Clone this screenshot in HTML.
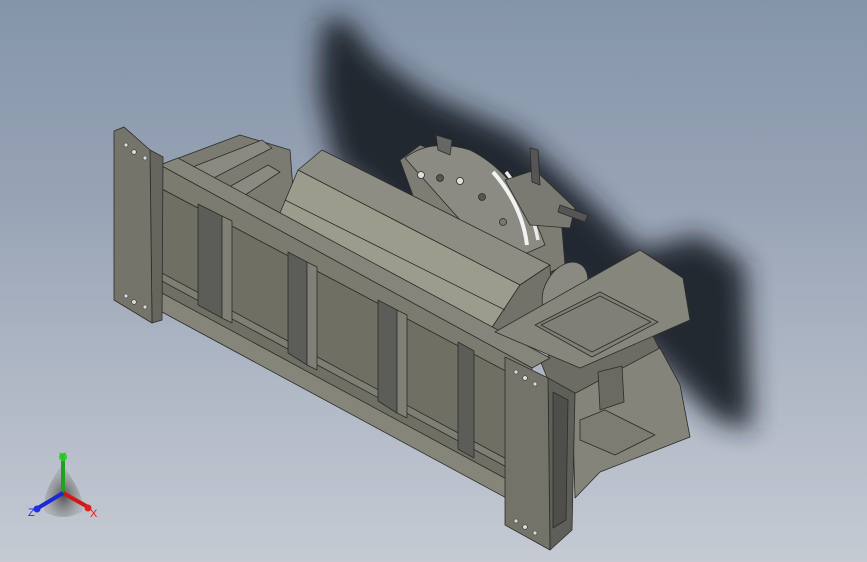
<!DOCTYPE html>
<html><head><meta charset="utf-8"><style>
html,body{margin:0;padding:0;width:867px;height:562px;overflow:hidden}
body{background:linear-gradient(180deg,#8595a9 0%,#97a3b5 35%,#b1b9c6 70%,#c5cad3 100%)}
svg{position:absolute;left:0;top:0}
text{font-family:"Liberation Sans",sans-serif;font-size:11px}
</style></head><body>
<svg width="867" height="562" viewBox="0 0 867 562">
<defs>
<filter id="b" x="-30%" y="-30%" width="160%" height="160%"><feGaussianBlur stdDeviation="13"/></filter>
<radialGradient id="tg" cx="50%" cy="60%" r="50%"><stop offset="0" stop-color="#555"/><stop offset="1" stop-color="#999" stop-opacity="0.4"/></radialGradient>
</defs>
<path d="M322,22 L345,18 L380,60 L430,95 L520,135 L590,200 L640,250 L700,235 L745,265 L752,430 L715,420 L665,370 L610,315 L520,265 L420,235 L335,165 L318,90 Z" fill="#1f242c" filter="url(#b)" opacity="0.95"/>
<g stroke="#2c2c28" stroke-width="0.8" stroke-linejoin="round">
<polygon points="160,165 240,135 290,150 295,215 275,225 160,170" fill="#7b7b72"/>
<polygon points="185,170 262,140 272,148 200,185" fill="#8a8a82"/>
<polygon points="215,195 268,165 280,172 230,205" fill="#8a8a82"/>
<polygon points="400,160 420,145 540,195 560,205 565,265 545,275 420,215" fill="#7d7d74"/>
<path d="M405,158 Q430,138 470,150 Q520,175 545,245 L500,265 Z" fill="#8b8b83"/>
<path d="M493,172 Q522,205 527,245" stroke="#f2f2f2" stroke-width="4" fill="none"/>
<path d="M506,172 Q532,205 538,240" stroke="#eaeaea" stroke-width="3.5" fill="none"/>
<circle cx="421" cy="175" r="3.5" fill="#ddd"/><circle cx="440" cy="178" r="3.5" fill="#555"/><circle cx="460" cy="181" r="3.5" fill="#ddd"/><circle cx="482" cy="197" r="3.5" fill="#555"/><circle cx="503" cy="222" r="3.5" fill="#777"/>
<polygon points="505,180 535,170 575,208 570,228 530,225" fill="#7a7a72"/>
<polygon points="436,135 452,140 450,155 438,150" fill="#666"/>
<polygon points="530,148 538,150 540,185 532,182" fill="#555"/>
<polygon points="560,205 588,215 585,222 558,212" fill="#555"/>
<polygon points="298,170 322,150 550,265 520,285" fill="#8d8d84"/>
<polygon points="277,220 298,170 520,285 487,335" fill="#9c9c8d"/>
<polygon points="487,335 520,285 550,265 552,310 532,332" fill="#72726a"/>
<line x1="285" y1="200" x2="505" y2="310"/>
<ellipse cx="565" cy="290" rx="20" ry="30" transform="rotate(30 565 290)" fill="#8a8a82"/>
<!-- filler under console -->
<polygon points="540,360 640,310 660,350 575,400 548,380" fill="#6c6c64"/>
<polygon points="160,165 178,158 550,358 532,368" fill="#85857b"/>
<polygon points="160,165 532,368 532,385 160,188" fill="#7b7b70"/>
<polygon points="160,188 532,385 512,497 160,307" fill="#6f6f63"/>
<polygon points="160,292 512,482 510,500 162,312" fill="#858579"/>
<polygon points="160,272 512,462 512,470 160,280" fill="#7e7e75"/>
<polygon points="198,204 222,216 222,318 198,305" fill="#5c5c58"/>
<polygon points="288,252 307,262 307,365 288,353" fill="#5c5c58"/>
<polygon points="378,300 397,310 397,413 378,401" fill="#5c5c58"/>
<polygon points="458,342 474,351 474,458 458,449" fill="#5c5c58"/>
<polygon points="222,216 232,221 232,323 222,318" fill="#808076"/>
<polygon points="307,262 317,267 317,370 307,365" fill="#808076"/>
<polygon points="397,310 407,315 407,418 397,413" fill="#808076"/>
<polygon points="572,395 660,348 680,385 690,437 600,472 575,498" fill="#84847a"/>
<polygon points="580,420 605,410 655,435 615,455 580,440" fill="#7c7c72"/>
<polygon points="598,372 622,366 624,402 600,410" fill="#6a6a62"/>
<polygon points="495,332 640,250 683,278 690,320 580,368" fill="#86867d"/>
<polygon points="535,325 600,292 658,322 592,357" fill="#7f7f77"/>
<polygon points="541,325 600,296 651,322 592,352" fill="none"/>
<polygon points="548,378 575,393 572,530 550,550" fill="#5f5f59"/>
<polygon points="505,357 548,378 550,550 505,525" fill="#73736a"/>
<polygon points="553,392 568,400 566,520 553,528" fill="#4e4e4a"/>
<polygon points="150,150 163,157 162,320 152,323" fill="#66665e"/>
<polygon points="114,131 124,127 150,150 152,323 114,300" fill="#74746a"/>
</g>
<g fill="#dcdcdc" stroke="#333" stroke-width="0.6">
<circle cx="126" cy="145" r="2"/><circle cx="134" cy="152" r="2.3"/><circle cx="145" cy="158" r="2"/>
<circle cx="126" cy="296" r="2"/><circle cx="134" cy="302" r="2.3"/><circle cx="145" cy="307" r="2"/>
<circle cx="516" cy="372" r="2"/><circle cx="525" cy="378" r="2.3"/><circle cx="535" cy="384" r="2"/>
<circle cx="516" cy="521" r="2"/><circle cx="525" cy="527" r="2.3"/><circle cx="535" cy="533" r="2"/>
</g>
<path d="M62,465 Q86,495 82,512 Q62,522 45,512 Q40,495 62,465 Z" fill="url(#tg)"/>
<line x1="63" y1="493" x2="63" y2="458" stroke="#1fa21f" stroke-width="4"/>
<circle cx="63" cy="457" r="4" fill="#2ecc2e"/>
<line x1="63" y1="493" x2="88" y2="507" stroke="#d01818" stroke-width="4"/>
<circle cx="88" cy="508" r="3.5" fill="#e02020"/>
<line x1="63" y1="493" x2="38" y2="508" stroke="#1a2ad0" stroke-width="4"/>
<circle cx="37" cy="509" r="3.5" fill="#2030e0"/>
<text x="59" y="460" fill="#20c020" font-size="10">Y</text>
<text x="90" y="517" fill="#e02020">X</text>
<text x="28" y="516" fill="#2030e0">Z</text>
</svg>
</body></html>
